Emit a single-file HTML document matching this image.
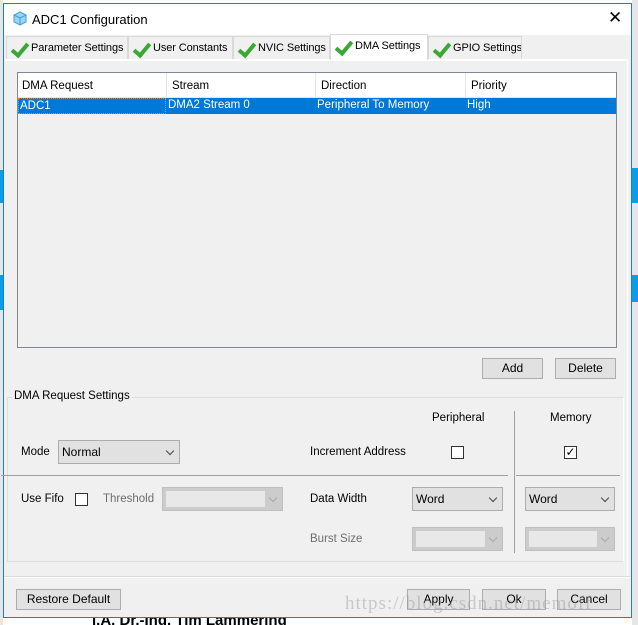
<!DOCTYPE html>
<html><head><style>
*{margin:0;padding:0;box-sizing:border-box}
body{width:638px;height:625px;position:relative;overflow:hidden;background:#fff;font-family:"Liberation Sans",sans-serif;font-size:11.5px;color:#000}
.a{position:absolute;white-space:nowrap}
.win{left:3px;top:3px;width:629px;height:615px;border:1px solid #1a7fd4;background:#f0f0f0}
.btn{position:absolute;background:#e1e1e1;border:1px solid #adadad;text-align:center;line-height:19px;font-size:12px}
.sel{position:absolute;background:#e1e1e1;border:1px solid #adadad;height:24px;line-height:22px;padding-left:3px;font-size:12px}
.sel.dis{background:#ccc;border-color:#bfbfbf}
.sel.dis::before{content:"";position:absolute;left:3px;top:3px;bottom:3px;right:17px;background:#e8e8e8}
.chev{position:absolute;right:6px;top:7px;width:6px;height:6px;border-right:1px solid #444;border-bottom:1px solid #444;transform:rotate(45deg)}
.dis .chev{border-color:#aaa}
.cb{position:absolute;width:13px;height:13px;border:1px solid #333;background:#fff}
.tab{position:absolute;top:36px;height:23px;background:#f0f0f0;border:1px solid #d9d9d9;border-bottom:none;font-size:11px;letter-spacing:-0.1px;line-height:22px;padding-left:24px;white-space:nowrap;overflow:hidden}
.tab::before{content:"";position:absolute;left:8px;top:3px;width:6px;height:13px;border-right:4px solid #3aa835;border-bottom:4px solid #3aa835;transform:rotate(40deg)}
.bg{background:#0a9ee8}
</style></head><body>
<div class="a" style="left:0;top:0;width:3px;height:625px;background:#e6e6e6"></div>
<div class="a bg" style="left:0;top:170px;width:3px;height:33px"></div>
<div class="a bg" style="left:0;top:275px;width:3px;height:35px"></div>
<div class="a" style="left:632px;top:0;width:6px;height:625px;background:#e6e6e6"></div>
<div class="a bg" style="left:632px;top:168px;width:6px;height:35px"></div>
<div class="a bg" style="left:632px;top:275px;width:6px;height:27px"></div>

<div class="a win">
 <div class="a" style="left:0;top:0;width:627px;height:31px;background:#fff"></div>
 <svg class="a" style="left:9px;top:7px" width="14" height="15" viewBox="0 0 14 15"><path d="M7 1L13 4V11L7 14L1 11V4Z" fill="#9fd3f5" stroke="#3a9ee0"/><path d="M7 7L13 4M7 7L1 4M7 7V14" stroke="#3a9ee0" fill="none"/></svg>
 <div class="a" style="left:28px;top:8px;font-size:13px">ADC1 Configuration</div>
 <div class="a" style="left:604px;top:4px;font-size:17px">✕</div>
</div>
<div class="a" style="left:0;top:618px;width:632px;height:7px;overflow:hidden"><div class="a" style="left:92px;top:-6px;font-weight:bold;font-size:15px">i.A. Dr.-Ing. Tim Lammering</div></div>
<!-- tabs -->
<div class="tab" style="left:6px;width:122px">Parameter Settings</div>
<div class="tab" style="left:128px;width:105px">User Constants</div>
<div class="tab" style="left:233px;width:97px">NVIC Settings</div>
<div class="tab" style="left:330px;top:34px;height:26px;width:98px;background:#fff;z-index:2;line-height:23px">DMA Settings</div>
<div class="tab" style="left:428px;width:94px">GPIO Settings</div>
<div class="a" style="left:5px;top:59px;width:623px;height:2px;background:#fff"></div>
<div class="a" style="left:5px;top:59px;width:623px;height:520px;border-right:1px solid #fff"></div>

<!-- table -->
<div class="a" style="left:17px;top:72px;width:600px;height:276px;border:1px solid #828790;background:#f0f0f0">
 <div class="a" style="left:0;top:0;width:598px;height:25px;background:#fff;border-bottom:1px solid #e5e5e5"></div>
 <div class="a" style="left:148px;top:0;width:1px;height:25px;background:#e5e5e5"></div>
 <div class="a" style="left:297px;top:0;width:1px;height:25px;background:#e5e5e5"></div>
 <div class="a" style="left:447px;top:0;width:1px;height:25px;background:#e5e5e5"></div>
 <div class="a" style="left:4px;top:7px">DMA Request</div>
 <div class="a" style="left:154px;top:7px">Stream</div>
 <div class="a" style="left:303px;top:7px">Direction</div>
 <div class="a" style="left:453px;top:7px">Priority</div>
 <div class="a" style="left:0;top:25px;width:598px;height:16px;background:#0078d7;color:#fff;line-height:15px">
  <div class="a" style="left:0;top:0;width:148px;height:16px;border:1px dotted #f08020;padding-left:1px">ADC1</div>
  <div class="a" style="left:150px">DMA2 Stream 0</div>
  <div class="a" style="left:299px">Peripheral To Memory</div>
  <div class="a" style="left:449px">High</div>
 </div>
</div>
<div class="btn" style="left:482px;top:358px;width:61px;height:21px">Add</div>
<div class="btn" style="left:555px;top:358px;width:61px;height:21px">Delete</div>

<!-- group -->
<div class="a" style="left:7px;top:397px;width:617px;height:165px;border:1px solid #dcdcdc;border-right-color:#fff"></div>
<div class="a" style="left:12px;top:390px;background:#f0f0f0;padding:0 2px">DMA Request Settings</div>
<div class="a" style="left:514px;top:411px;width:1px;height:142px;background:#a0a0a0"></div>
<div class="a" style="left:1px;top:475px;width:507px;height:1px;background:#a0a0a0"></div>
<div class="a" style="left:516px;top:475px;width:104px;height:1px;background:#a0a0a0"></div>
<div class="a" style="left:432px;top:412px">Peripheral</div>
<div class="a" style="left:550px;top:412px">Memory</div>
<div class="a" style="left:21px;top:446px">Mode</div>
<div class="sel" style="left:58px;top:440px;width:122px">Normal<span class="chev"></span></div>
<div class="a" style="left:310px;top:446px">Increment Address</div>
<div class="cb" style="left:451px;top:446px"></div>
<div class="cb" style="left:564px;top:446px;font-size:12px;line-height:10px;text-align:center">✓</div>
<div class="a" style="left:21px;top:493px">Use Fifo</div>
<div class="cb" style="left:75px;top:493px"></div>
<div class="a" style="left:103px;top:493px;color:#6d6d6d">Threshold</div>
<div class="sel dis" style="left:162px;top:487px;width:121px"><span class="chev"></span></div>
<div class="a" style="left:310px;top:493px">Data Width</div>
<div class="sel" style="left:412px;top:487px;width:91px">Word<span class="chev"></span></div>
<div class="sel" style="left:525px;top:487px;width:90px">Word<span class="chev"></span></div>
<div class="a" style="left:310px;top:533px;color:#6d6d6d">Burst Size</div>
<div class="sel dis" style="left:412px;top:527px;width:91px"><span class="chev"></span></div>
<div class="sel dis" style="left:525px;top:527px;width:90px"><span class="chev"></span></div>

<div class="a" style="left:4px;top:576px;width:627px;height:1px;background:#dcdcdc"></div>
<div class="a" style="left:4px;top:577px;width:627px;height:1px;background:#fff"></div>
<div class="btn" style="left:16px;top:589px;width:105px;height:21px">Restore Default</div>
<div class="btn" style="left:407px;top:589px;width:63px;height:21px">Apply</div>
<div class="btn" style="left:482px;top:589px;width:64px;height:21px">Ok</div>
<div class="btn" style="left:557px;top:589px;width:64px;height:21px">Cancel</div>
<div class="a" style="left:345px;top:593px;font-family:'Liberation Serif',serif;font-size:19px;color:rgba(150,150,150,0.45);letter-spacing:1px">https://blog.csdn.net/memoff</div>
</body></html>
